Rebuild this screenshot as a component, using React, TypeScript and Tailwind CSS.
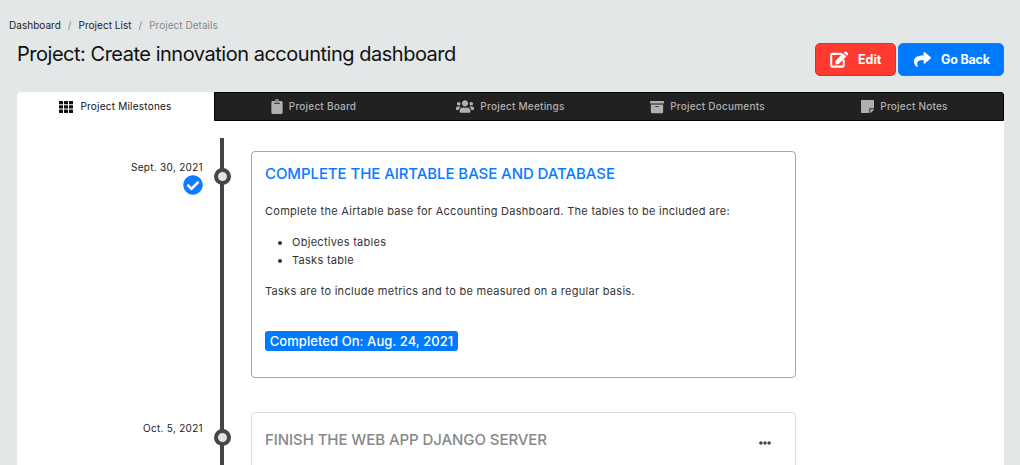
import type { ReactNode } from "react";
import { FaArchive, FaCheckCircle, FaClipboard, FaEllipsisH, FaShare, FaStickyNote, FaUsers } from "react-icons/fa";

const tabs: { icon: ReactNode; label: string }[] = [
  { icon: <FaClipboard className="h-[15px] w-3" />, label: "Project Board" },
  { icon: <FaUsers className="h-[15px] w-[18px]" />, label: "Project Meetings" },
  { icon: <FaArchive className="size-[14px]" />, label: "Project Documents" },
  { icon: <FaStickyNote className="h-[15px] w-[13px]" />, label: "Project Notes" },
];

function GridIcon() {
  return (
    <svg className="h-3 w-[14px]" viewBox="0 0 14 12" fill="currentColor">
      {[0, 5, 10].map((x) =>
        [0, 4.3, 8.6].map((y) => <rect key={`${x}-${y}`} x={x} y={y} width="4" height="3.3" rx="0.3" />),
      )}
    </svg>
  );
}

function EditIcon() {
  return (
    <svg className="h-[17px] w-[19px]" viewBox="0 0 19 17" fill="none">
      <path d="M10.8 2.9H2.2Q1.2 2.9 1.2 3.9V14.6Q1.2 15.6 2.2 15.6H12.7Q13.7 15.6 13.7 14.6V9.6" stroke="currentColor" strokeWidth="2.1" strokeLinecap="round" />
      <path d="M12.9 2.3L16.3 5.6L8.7 13L5.1 13.4L5.6 9.7Z" fill="currentColor" />
      <path d="M13.7 1.6L14.5.8Q15.4 0 16.3.8L17.9 2.3Q18.7 3.1 17.9 4L17.1 4.8Z" fill="currentColor" />
    </svg>
  );
}

function Header() {
  return (
    <header className="h-[92px]">
      <nav className="flex h-[33px] items-end gap-[7px] pl-[9px] text-[10px] leading-[15px] tracking-[0.03px] text-[#222]">
        <a>Dashboard</a>
        <span className="text-[#888]">/</span>
        <a>Project List</a>
        <span className="text-[#888]">/</span>
        <span className="text-[#858787]">Project Details</span>
      </nav>
      <div className="flex items-start justify-between pl-[17px] pr-4">
        <h1 className="pt-[6px] text-[20px] leading-[30px] tracking-[-0.48px] text-[#111]">
          Project: Create innovation accounting dashboard
        </h1>
        <div className="flex gap-[2px] pt-[10px] text-[12.5px] font-bold text-white">
          <button className="flex h-[33px] w-[81px] items-center rounded-[5px] border border-[#ff2018] bg-[#ff3b30] pl-[14px]">
            <EditIcon />
            <span className="ml-[9px] pt-[2px]">Edit</span>
          </button>
          <button className="flex h-[33px] w-[106px] items-center rounded-[5px] border border-[#1680ff] bg-[#007aff] pl-[15px]">
            <FaShare className="size-[17px]" />
            <span className="ml-[10px] pt-[2px] tracking-[-0.2px]">Go Back</span>
          </button>
        </div>
      </div>
    </header>
  );
}

function TabBar() {
  return (
    <div className="flex h-[29px] shrink-0 text-[10px] tracking-[0.22px]">
      <div className="flex w-[197px] items-center justify-center gap-[7px] rounded-t bg-white text-[#111]">
        <GridIcon />
        <span>Project Milestones</span>
      </div>
      <div className="flex flex-1 rounded-tr-[3px] border border-black bg-[#212121]">
        {tabs.map((t) => (
          <div key={t.label} className="flex flex-1 items-center justify-center gap-[6px] font-medium text-[#b0b0b0]">
            {t.icon}
            <span>{t.label}</span>
          </div>
        ))}
      </div>
    </div>
  );
}

function Marker() {
  return <span className="absolute left-[-6.5px] size-[17px] rounded-full border-4 border-[#464646] bg-[#e2e2e2]" />;
}

export default function App() {
  return (
    <div className="flex h-[465px] w-[1020px] flex-col overflow-hidden bg-[#e3e7e8] font-[Inter,sans-serif]">
      <Header />
      <main className="ml-[17px] mr-4 flex h-[373px] flex-col bg-[#e3e7e8]">
        <TabBar />
        <section className="flex min-h-0 flex-1 bg-white pt-[17px]">
          <div className="flex w-[186px] flex-col items-end text-[10px] leading-4 tracking-[0.3px] text-[#222]">
            <div className="mt-[21px]">Sept. 30, 2021</div>
            <FaCheckCircle className="size-[20px] shrink-0 text-[#0d7aff]" />
            <div className="mt-[225px]">Oct. 5, 2021</div>
          </div>
          <div className="relative ml-[17px] w-1 bg-[#444]">
            <div className="absolute top-[29.5px]"><Marker /></div>
            <div className="absolute top-[291px]"><Marker /></div>
          </div>
          <div className="ml-[27px] flex w-[545px] flex-col pt-[13px]">
            <article className="h-[227px] shrink-0 rounded border border-[#82a5ff] px-[13px] text-[11px] leading-[18px] tracking-[0.28px] text-[#333]">
              <h2 className="pt-[11px] text-[15px] font-medium leading-[22px] tracking-[-0.08px] text-[#087aff]">
                COMPLETE THE AIRTABLE BASE AND DATABASE
              </h2>
              <p className="mt-[17px]">Complete the Airtable base for Accounting Dashboard. The tables to be included are:</p>
              <ul className="mt-[13px] list-disc pl-[27px]">
                <li>Objectives tables</li>
                <li>Tasks table</li>
              </ul>
              <p className="mt-[13px]">Tasks are to include metrics and to be measured on a regular basis.</p>
              <span className="mt-[31px] flex h-5 w-[193px] items-center justify-center whitespace-nowrap rounded-[3px] bg-[#007aff] text-[13px] font-medium tracking-[0.06px] text-white">
                Completed On: Aug. 24, 2021
              </span>
            </article>
            <article className="mt-[34px] flex h-[100px] shrink-0 items-start justify-between rounded border border-[#dedede] pl-[13px] pr-6">
              <h2 className="pt-[16px] text-[15px] font-medium leading-[22px] tracking-[-0.08px] text-[#888]">FINISH THE WEB APP DJANGO SERVER</h2>
              <FaEllipsisH className="mt-[24px] size-3 text-[#444]" />
            </article>
          </div>
        </section>
      </main>
    </div>
  );
}
